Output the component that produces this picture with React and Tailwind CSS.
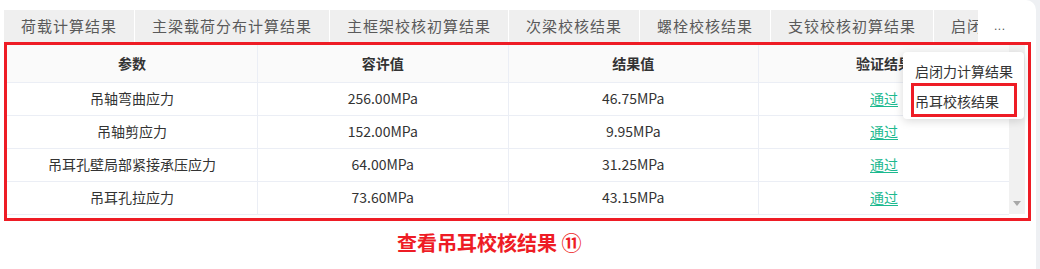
import React from "react";

const tabs = [
  "荷载计算结果",
  "主梁载荷分布计算结果",
  "主框架校核初算结果",
  "次梁校核结果",
  "螺栓校核结果",
  "支铰校核初算结果",
  "启闭力计算结果",
];

const rows = [
  { name: "吊轴弯曲应力", allow: "256.00MPa", value: "46.75MPa" },
  { name: "吊轴剪应力", allow: "152.00MPa", value: "9.95MPa" },
  { name: "吊耳孔壁局部紧接承压应力", allow: "64.00MPa", value: "31.25MPa" },
  { name: "吊耳孔拉应力", allow: "73.60MPa", value: "43.15MPa" },
];

export default function App() {
  return (
    <div
      className="flex h-[269px] w-[1040px] overflow-hidden bg-[#eef0f3]"
      style={{ fontFamily: '"Noto Sans CJK SC", "Noto Sans", sans-serif' }}
    >
      <div className="relative w-[1036px] rounded-tr-[10px] bg-white">
        {/* tab strip */}
        <div className="flex items-center pl-[4px] pt-[10px]">
          <div className="flex h-[32px] w-[974px] shrink-0 gap-px overflow-hidden">
            {tabs.map((t) => (
              <div
                key={t}
                className="flex shrink-0 items-center bg-[#efefef] px-[17px] text-[15px] tracking-[1px] whitespace-nowrap text-[#5a5a5a]"
              >
                {t}
              </div>
            ))}
          </div>
          <div className="ml-[16px] shrink-0 font-['Liberation_Sans'] text-[12px] leading-none tracking-[0.5px] whitespace-nowrap text-[#555]">
            ...
          </div>
        </div>

        {/* highlighted table */}
        <div className="ml-[4px] h-[179px] w-[1027px] border-[3px] border-[#ee1c25]">
          <div className="flex">
            <table className="w-[1002px] table-fixed border-collapse text-center text-[14px] text-[#333]">
              <thead>
                <tr className="h-[37px] bg-[#fafafa]">
                  {["参数", "容许值", "结果值", "验证结果"].map((h, i) => (
                    <th
                      key={h}
                      className={`border-b border-[#ebeef5] font-bold ${i < 3 ? "border-r" : ""}`}
                    >
                      {h}
                    </th>
                  ))}
                </tr>
              </thead>
              <tbody>
                {rows.map((r) => (
                  <tr key={r.name} className="h-[33px]">
                    <td className="border-r border-b border-[#ebeef5]">{r.name}</td>
                    <td className="border-r border-b border-[#ebeef5]">{r.allow}</td>
                    <td className="border-r border-b border-[#ebeef5]">{r.value}</td>
                    <td className="border-b border-[#ebeef5]">
                      <span className="text-[#1cb98f] underline underline-offset-2">通过</span>
                    </td>
                  </tr>
                ))}
              </tbody>
            </table>
            <div className="flex h-[169px] w-[16px] flex-col items-center justify-end bg-[#f1f1f1] pb-[8px]">
              <div className="h-0 w-0 border-x-[4px] border-t-[5px] border-x-transparent border-t-[#a8a8a8]" />
            </div>
          </div>
        </div>

        {/* caption */}
        <div className="mt-[8px] pl-[397px] text-[20px] leading-[28px] font-bold text-[#ee1c25]">
          查看吊耳校核结果 ⑪
        </div>

        {/* overflow dropdown */}
        <div className="absolute top-[52px] left-[903px] w-[121px] rounded-[4px] bg-white pt-[7px] pb-[2px] text-[14px] text-[#333] shadow-[0_2px_10px_rgba(0,0,0,0.15)]">
          <div className="flex h-[24px] items-center pl-[12px]">启闭力计算结果</div>
          <div className="ml-[8px] flex h-[34px] w-[106px] items-center border-[3px] border-[#ee1c25] pt-[3px] pl-[1px]">
            吊耳校核结果
          </div>
        </div>
      </div>
    </div>
  );
}
